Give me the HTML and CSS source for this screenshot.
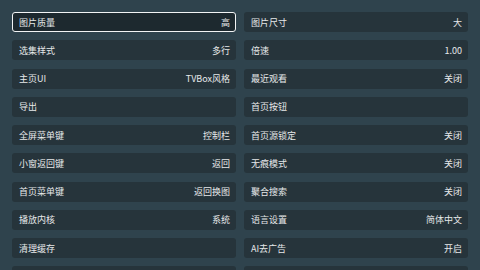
FILE: index.html
```html
<!DOCTYPE html>
<html lang="zh-CN">
<head>
    <meta charset="UTF-8">
    <meta name="viewport" content="width=device-width, initial-scale=1.0">
    <title>设置</title>
    <link rel="stylesheet" href="styles.css">
</head>
<body>
    <div class="settings">
        <div class="item focused"><span>图片质量</span><span>高</span></div>
        <div class="item"><span>图片尺寸</span><span>大</span></div>
        <div class="item"><span>选集样式</span><span>多行</span></div>
        <div class="item"><span>倍速</span><span>1.00</span></div>
        <div class="item"><span>主页UI</span><span>TVBox风格</span></div>
        <div class="item"><span>最近观看</span><span>关闭</span></div>
        <div class="item"><span>导出</span><span></span></div>
        <div class="item"><span>首页按钮</span><span></span></div>
        <div class="item"><span>全屏菜单键</span><span>控制栏</span></div>
        <div class="item"><span>首页源锁定</span><span>关闭</span></div>
        <div class="item"><span>小窗返回键</span><span>返回</span></div>
        <div class="item"><span>无痕模式</span><span>关闭</span></div>
        <div class="item"><span>首页菜单键</span><span>返回换图</span></div>
        <div class="item"><span>聚合搜索</span><span>关闭</span></div>
        <div class="item"><span>播放内核</span><span>系统</span></div>
        <div class="item"><span>语言设置</span><span>简体中文</span></div>
        <div class="item"><span>清理缓存</span><span></span></div>
        <div class="item"><span>AI去广告</span><span>开启</span></div>
        <div class="item"></div>
        <div class="item"></div>
    </div>
</body>
</html>
```

FILE: styles.css
```css
body {
    margin: 0;
    background-color: #2f434d;
    color: #e6e9ea;
    font-family: "Noto Sans CJK SC", "Noto Sans", sans-serif;
    font-size: 9px;
    overflow: hidden;
}

.settings {
    display: grid;
    grid-template-columns: 224px 224px;
    column-gap: 8px;
    row-gap: 8.25px;
    padding: 12px 12px 0;
}

.item {
    display: flex;
    justify-content: space-between;
    align-items: center;
    height: 20px;
    padding: 0 6px 0 7px;
    background-color: #26343b;
    border-radius: 3px;
    box-sizing: border-box;
    line-height: 1;
}

.item.focused {
    background-color: #1d292f;
    border: 1px solid #f2f4f5;
    padding: 0 5px 0 6px;
}
```
